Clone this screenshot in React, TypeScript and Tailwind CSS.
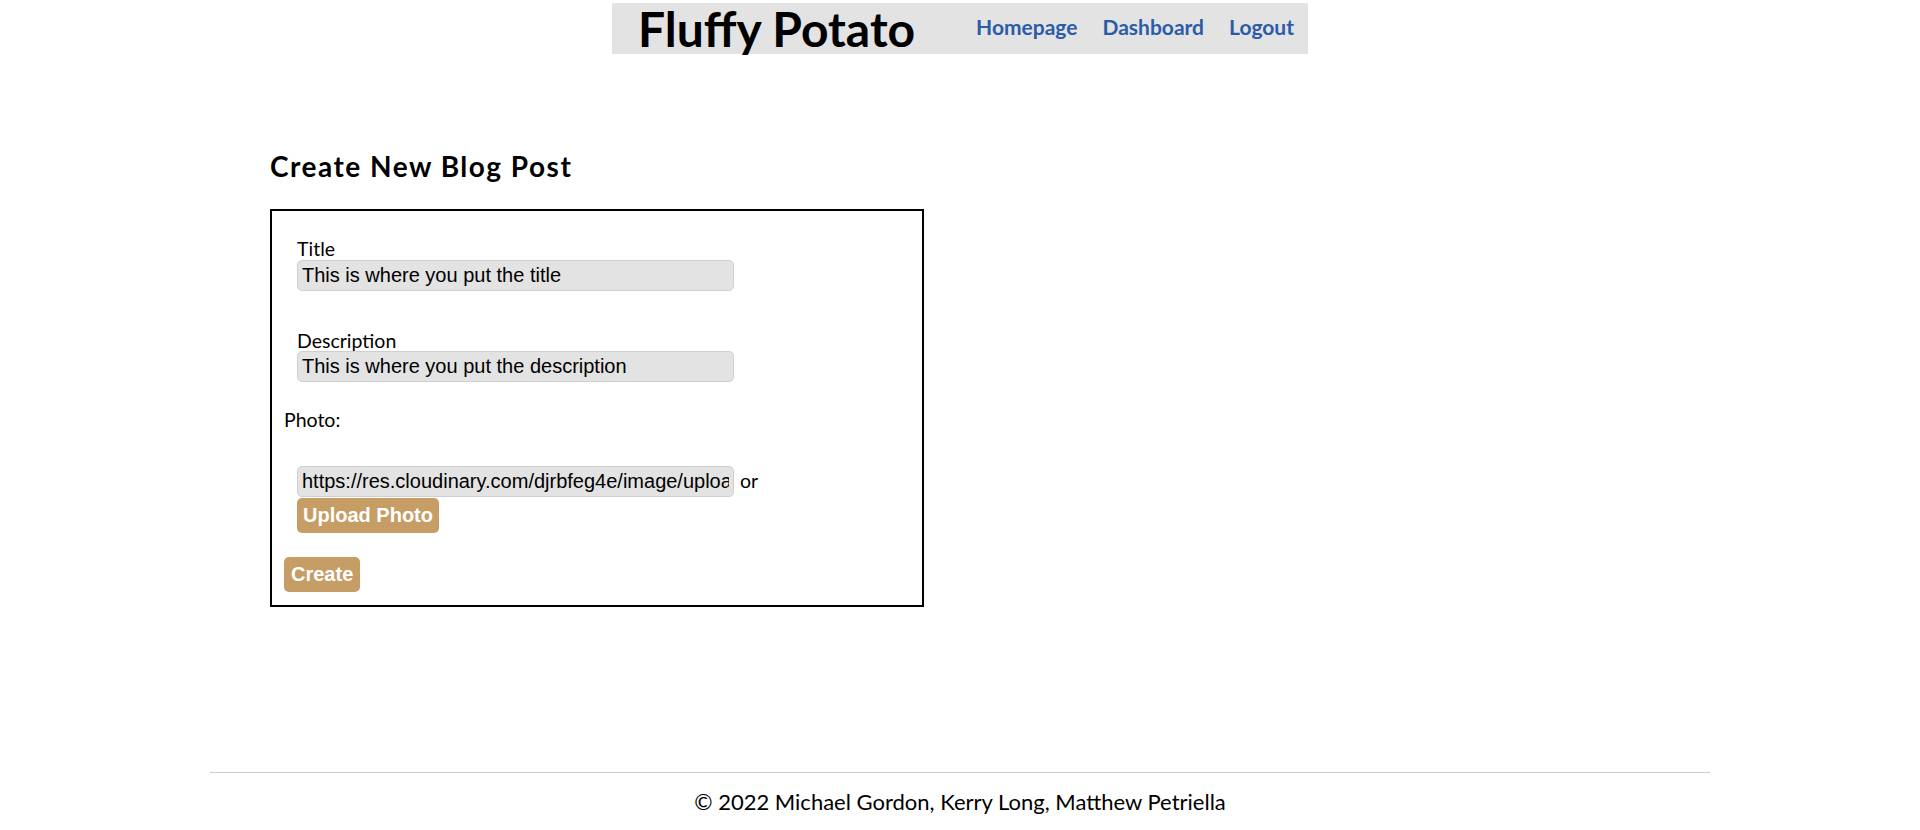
import React from "react";

const NavLinks = ["Homepage", "Dashboard", "Logout"];

const Field: React.FC<{ label: string; value: string }> = ({ label, value }) => (
    <div className="ml-[13px] flex flex-col">
        <label className="text-[19.5px] leading-none">{label}</label>
        <input
            readOnly
            value={value}
            className="mt-[1px] h-[31px] w-[437px] rounded-[5px] border border-[#cfcfcf] bg-[#e3e3e3] px-[4px] font-['Liberation_Sans',Arial,sans-serif] text-[20px] text-black outline-none"
        />
    </div>
);

export default function App() {
    return (
        <div className="min-h-screen bg-white font-['Lato',sans-serif] text-black">
            <div className="flex justify-center pt-[3px]">
                <header className="flex h-[51px] w-[696px] bg-[#e3e3e3]">
                    <h1 className="ml-[26px] mt-[2px] text-[48px] font-bold leading-none">Fluffy Potato</h1>
                    <nav className="ml-auto mr-[14px] mt-[13px] flex gap-[25px] text-[21px] font-bold leading-none text-[#2a5ca8]">
                        {NavLinks.map((l) => (
                            <a key={l} href="#" className="h-fit">
                                {l}
                            </a>
                        ))}
                    </nav>
                </header>
            </div>

            <main className="pl-[270px]">
                <h2 className="mt-[98px] text-[28px] font-bold leading-none tracking-[1.5px]">Create New Blog Post</h2>
                <form className="mt-[29px] w-[654px] border-2 border-black pb-[13px] pl-[12px] pt-[28px]">
                    <Field label="Title" value="This is where you put the title" />
                    <div className="mt-[40px]">
                        <Field label="Description" value="This is where you put the description" />
                    </div>
                    <p className="mt-[28px] text-[19.5px] leading-none">Photo:</p>
                    <div className="ml-[13px] mt-[36px]">
                        <div className="flex items-center gap-[6px] text-[19.5px]">
                            <input
                                readOnly
                                value="https://res.cloudinary.com/djrbfeg4e/image/upload/v1/sample.jpg"
                                className="h-[31px] w-[437px] rounded-[5px] border border-[#cfcfcf] bg-[#e3e3e3] px-[4px] font-['Liberation_Sans',Arial,sans-serif] text-[20px] text-black outline-none"
                            />
                            <span>or</span>
                        </div>
                        <button
                            type="button"
                            className="mt-[1px] h-[35px] rounded-[5px] bg-[#c69d64] px-[6px] font-['Liberation_Sans',Arial,sans-serif] text-[20px] font-bold text-white"
                        >
                            Upload Photo
                        </button>
                    </div>
                    <button
                        type="button"
                        className="mt-[24px] block h-[35px] rounded-[5px] bg-[#c69d64] px-[7px] font-['Liberation_Sans',Arial,sans-serif] text-[20px] font-bold text-white"
                    >
                        Create
                    </button>
                </form>
            </main>

            <footer className="mx-auto mt-[165px] w-[1500px] border-t border-[#cccccc] pb-[17px] pt-[18px] text-center">
                <p className="text-[22px] leading-none">© 2022 Michael Gordon, Kerry Long, Matthew Petriella</p>
            </footer>
        </div>
    );
}
